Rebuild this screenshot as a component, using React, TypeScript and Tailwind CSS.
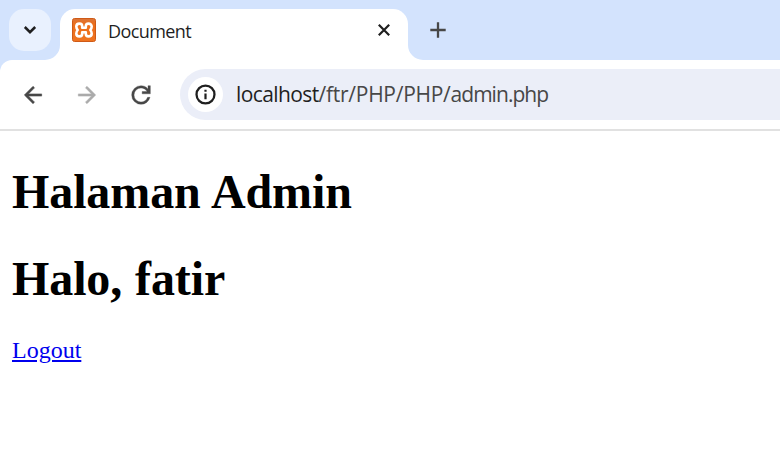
import React from "react";

function XamppLogo() {
  return (
    <svg width="24" height="24" viewBox="0 0 24 24" fill="none" className="shrink-0">
      <defs>
        <linearGradient id="xampp" x1="0" y1="0" x2="0" y2="1">
          <stop offset="0" stopColor="#d9743a" />
          <stop offset="0.25" stopColor="#ec6f1c" />
          <stop offset="1" stopColor="#ef7420" />
        </linearGradient>
      </defs>
      <rect x="0.5" y="0.5" width="23" height="23" rx="2" fill="url(#xampp)" stroke="#cf5a17" />
      <path
        d="M12 9.800H10.200V8.200C10.200 6.500 9.100 5.600 7.500 5.600C5.600 5.600 4.300 6.800 4.300 8.600C4.300 10.100 4.900 11.100 5.700 12C4.900 12.900 4.300 13.900 4.300 15.400C4.300 17.200 5.600 18.400 7.500 18.400C9.100 18.400 10.200 17.500 10.200 15.800V14.200H13.800V15.800C13.800 17.500 14.900 18.400 16.500 18.400C18.400 18.400 19.700 17.200 19.700 15.400C19.700 13.900 19.100 12.900 18.300 12C19.100 11.100 19.700 10.100 19.700 8.600C19.700 6.800 18.400 5.600 16.500 5.600C14.900 5.600 13.800 6.500 13.800 8.200V9.800Z"
        stroke="white"
        strokeWidth="2.600"
        strokeLinejoin="round"
      />
    </svg>
  );
}

function TabStrip() {
  return (
    <div className="flex h-[60px] bg-[#d3e3fd] pt-[9px] pl-[9px]">
      <button className="flex size-[42px] items-center justify-center rounded-[15px] bg-[#e9f1fe]" aria-label="Search tabs">
        <svg width="14" height="10" viewBox="0 0 14 10" fill="none" stroke="#1f1f1f" strokeWidth="2.500">
          <path d="M1.800 2L7 7.200L12.200 2" />
        </svg>
      </button>
      <svg className="-ml-[6px] self-end" width="15" height="15" viewBox="0 0 15 15">
        <path d="M15 0V15H0A15 15 0 0 0 15 0Z" fill="white" />
      </svg>
      <div className="flex h-[51px] w-[348px] items-start rounded-t-[15px] bg-white pt-[9px] pr-[16px] pl-[12px]">
        <XamppLogo />
        <span className="ml-[12px] flex-1 font-['Open_Sans',sans-serif] text-[18px] leading-[26px] tracking-[-0.600px] text-[#1f1f1f]">
          Document
        </span>
        <svg className="mt-[5px]" width="16" height="14" viewBox="0 0 16 14" fill="none" stroke="#1f1f1f" strokeWidth="2.200">
          <path d="M2.800 1.800L13.200 12.200M13.200 1.800L2.800 12.200" />
        </svg>
      </div>
      <svg className="self-end" width="15" height="15" viewBox="0 0 15 15">
        <path d="M0 0V15H15A15 15 0 0 1 0 0Z" fill="white" />
      </svg>
      <svg className="mt-[13px] ml-[7px]" width="16" height="16" viewBox="0 0 16 16" fill="none" stroke="#474747" strokeWidth="2.300">
        <path d="M8 0.300V15.700M0.300 8H15.700" />
      </svg>
    </div>
  );
}

function Toolbar() {
  return (
    <div className="bg-[#d3e3fd]">
      <div className="flex h-[71px] items-start rounded-tl-[12px] border-b-2 border-[#e1e1e1] bg-white pt-[9px] pl-[20px]">
        <div className="flex h-[51px] items-center">
          <svg width="26" height="26" viewBox="0 0 24 24" fill="#474747" stroke="#474747" strokeWidth="0.500">
            <path d="m7.825 13l5.600 5.600L12 20l-8-8l8-8l1.425 1.400l-5.600 5.600H20v2z" />
          </svg>
          <svg className="ml-[28px]" width="26" height="26" viewBox="0 0 24 24" fill="#ababab" stroke="#ababab" strokeWidth="0.500">
            <path d="M16.175 13H4v-2h12.175l-5.600-5.600L12 4l8 8l-8 8l-1.425-1.400z" />
          </svg>
          <svg className="ml-[27px]" width="28" height="28" viewBox="0 0 24 24" fill="#474747" stroke="#474747" strokeWidth="0.300">
            <path d="M12 20q-3.350 0-5.675-2.325T4 12t2.325-5.675T12 4q1.725 0 3.300.713T18 6.750V4h2v7h-7V9h4.200q-.8-1.400-2.187-2.200T12 6Q9.500 6 7.750 7.750T6 12t1.750 4.250T12 18q1.925 0 3.475-1.100T17.650 14h2.100q-.7 2.650-2.850 4.325T12 20" />
          </svg>
        </div>
        <div className="ml-[25px] flex h-[51px] flex-1 items-center rounded-l-full bg-[#ebeef8] pl-[8px]">
          <div className="flex size-[35px] items-center justify-center rounded-full bg-white">
            <svg width="21" height="21" viewBox="0 0 22 22" fill="none" stroke="#1f1f1f">
              <circle cx="11" cy="11" r="9.400" strokeWidth="2.400" />
              <path d="M11 10V16M11 6V8" strokeWidth="2.300" />
            </svg>
          </div>
          <span className="-mt-[2px] ml-[13px] font-['Open_Sans',sans-serif] text-[21px] leading-[30px] text-[#474747]">
            <span className="tracking-[-0.600px] text-[#1f1f1f]">localhost</span>
            <span className="tracking-[-0.270px]">/ftr/PHP/PHP/</span>
            <span className="tracking-[-0.950px]">admin.php</span>
          </span>
        </div>
      </div>
    </div>
  );
}

export default function App() {
  return (
    <div className="h-[471px] w-[780px] overflow-hidden bg-white">
      <TabStrip />
      <Toolbar />
      <main className="px-[12px] pt-[33px] font-['Liberation_Serif','Times_New_Roman',serif] text-black">
        <h1 className="text-[48px] leading-[55px] font-bold tracking-[-0.100px] [word-spacing:1px]">Halaman Admin</h1>
        <h1 className="mt-[32px] text-[48px] leading-[55px] font-bold tracking-[-0.100px] [word-spacing:1px]">Halo, fatir</h1>
        <p className="mt-[31px] text-[24px] leading-[27px]">
          <a href="#" className="text-[#0000ee] underline">Logout</a>
        </p>
      </main>
    </div>
  );
}
